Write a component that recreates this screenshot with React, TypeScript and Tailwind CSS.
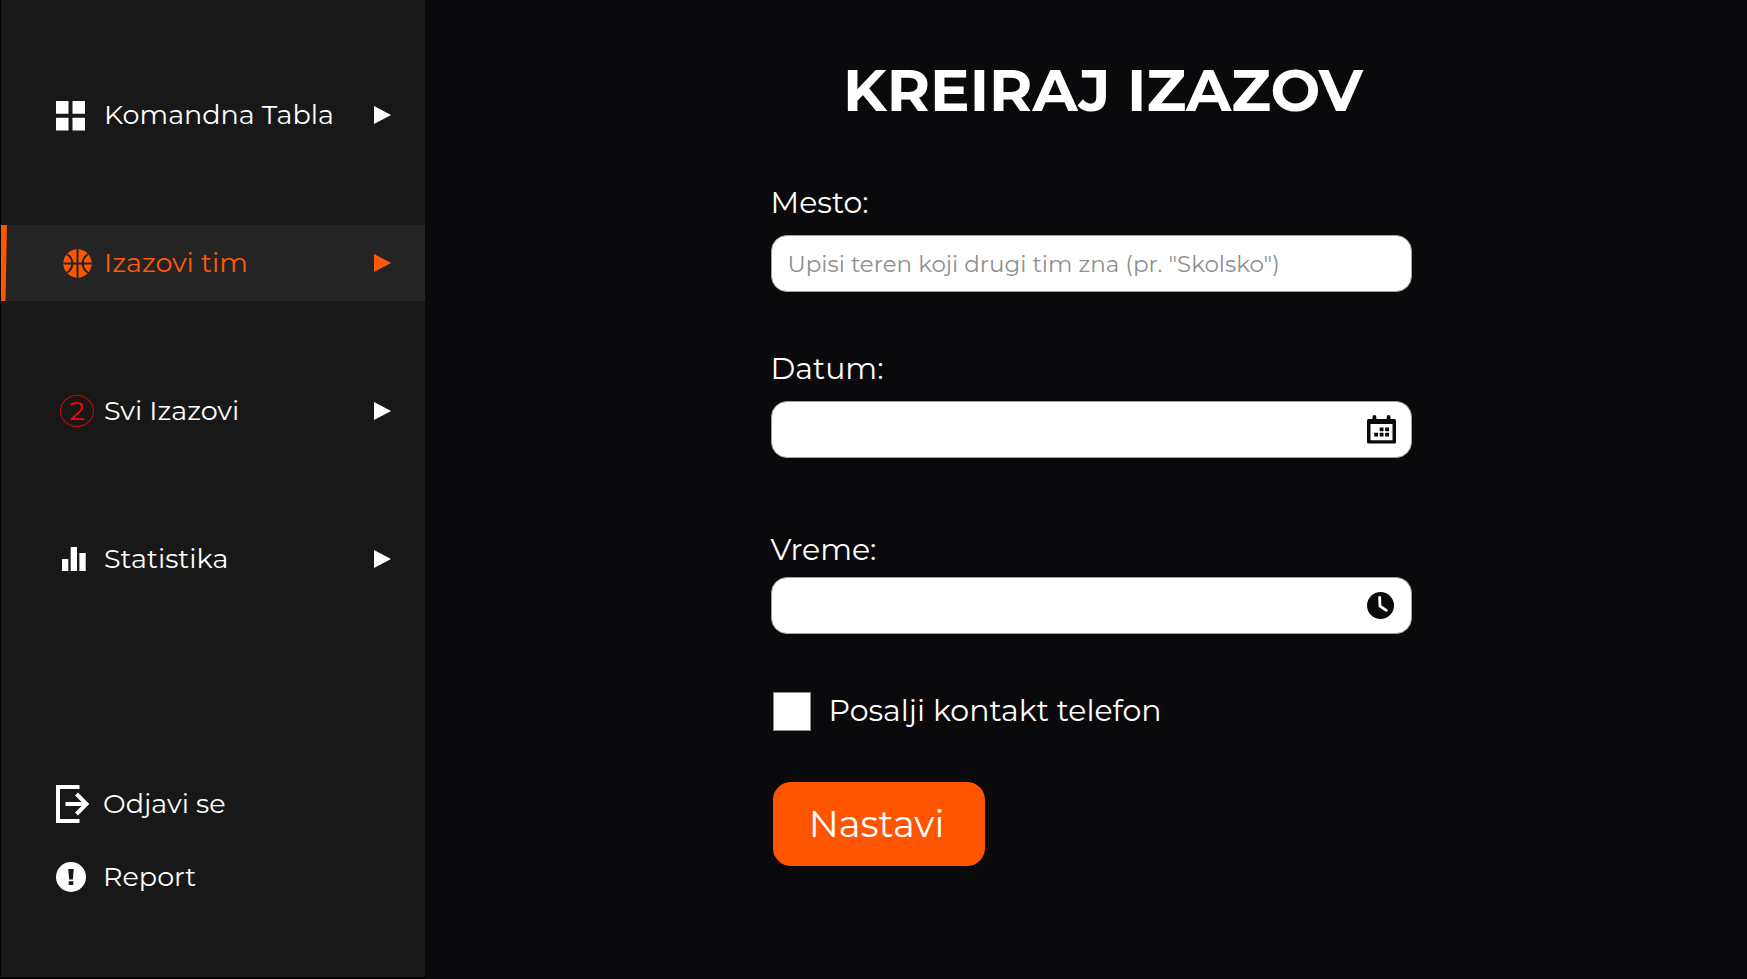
import { useState } from "react";
import type { ReactNode } from "react";

function GridIcon() {
  return (
    <svg width="30" height="31" viewBox="0 0 30 31" fill="#fff" aria-hidden="true">
      <rect x="1" y="1" width="12.5" height="12.8" rx="0.5" />
      <rect x="17.5" y="1" width="12.5" height="12.8" rx="0.5" />
      <rect x="1" y="17.8" width="12.5" height="12.8" rx="0.5" />
      <rect x="17.5" y="17.8" width="12.5" height="12.8" rx="0.5" />
    </svg>
  );
}

function BallIcon() {
  return (
    <svg width="29" height="29" viewBox="0 0 29 29" aria-hidden="true">
      <defs>
        <clipPath id="ball">
          <circle cx="14.5" cy="14.5" r="14.2" />
        </clipPath>
      </defs>
      <circle cx="14.5" cy="14.5" r="14.2" fill="#ff5500" />
      <g clipPath="url(#ball)" fill="none" stroke="#242424" strokeWidth="2">
        <path d="M14.5 0V29M0 14.5H29" />
        <circle cx="-1.5" cy="14.5" r="10.8" />
        <circle cx="30.5" cy="14.5" r="10.8" />
      </g>
    </svg>
  );
}

function BarsIcon() {
  return (
    <svg width="24" height="24" viewBox="0 0 24 24" fill="#fff" aria-hidden="true">
      <rect x="0" y="12" width="6.3" height="12" />
      <rect x="8.7" y="0" width="6.3" height="24" />
      <rect x="17.4" y="6" width="6.3" height="18" />
    </svg>
  );
}

function LogoutIcon() {
  return (
    <svg width="34" height="38" viewBox="0 0 34 38" fill="none" stroke="#fff" aria-hidden="true">
      <path d="M23.5 2H2V36H23.5" strokeWidth="4" />
      <path d="M9.5 19H30" strokeWidth="4" />
      <path d="M20.5 9L30.5 19L20.5 29" strokeWidth="4" />
    </svg>
  );
}

function AlertIcon() {
  return (
    <svg width="30" height="30" viewBox="0 0 30 30" aria-hidden="true">
      <circle cx="15" cy="15" r="15" fill="#fff" />
      <path d="M12.2 7H17.8L16.8 17.5H13.2Z" fill="#181818" />
      <rect x="12.7" y="19.2" width="4.6" height="3.8" fill="#181818" />
    </svg>
  );
}

function CalendarIcon() {
  return (
    <svg width="29" height="29" viewBox="0 0 29 29" fill="#0a0a0c" aria-hidden="true">
      <path
        fillRule="evenodd"
        d="M5.5 4V2a1.9 1.9 0 0 1 3.8 0V4H19.7V2a1.9 1.9 0 0 1 3.8 0V4H27.5A1.5 1.5 0 0 1 29 5.5V27A1.5 1.5 0 0 1 27.5 28.5H1.5A1.5 1.5 0 0 1 0 27V5.5A1.5 1.5 0 0 1 1.5 4ZM3.5 9V25.2H25.5V9Z"
      />
      <path d="M12.7 12.5h3.8v3.8h-3.8zM18.2 12.5h3.8v3.8h-3.8zM7.2 17.8h3.8v3.8h-3.8zM12.7 17.8h3.8v3.8h-3.8zM18.2 17.8h3.8v3.8h-3.8z" />
    </svg>
  );
}

function ClockIcon() {
  return (
    <svg width="29" height="27" viewBox="0 0 29 27" aria-hidden="true">
      <circle cx="13.5" cy="13.5" r="13.5" fill="#0a0a0c" />
      <path
        d="M12.6 5.3L13 14.1L19.3 18.3"
        fill="none"
        stroke="#fff"
        strokeWidth="2.8"
        strokeLinecap="round"
        strokeLinejoin="round"
      />
    </svg>
  );
}

function NavItem({ icon, label, active = false }: { icon: ReactNode; label: string; active?: boolean }) {
  return (
    <a
      href="#"
      aria-current={active ? "page" : undefined}
      className={
        active
          ? "relative flex h-[76px] items-center bg-[#242424] pr-[34px] pl-[54px] text-[#ff5a0a]"
          : "relative flex h-[76px] items-center pr-[34px] pl-[54px] text-white"
      }
    >
      {active && (
        <svg
          className="absolute inset-y-0 left-0 h-full w-1.5"
          viewBox="0 0 6 76"
          preserveAspectRatio="none"
          aria-hidden="true"
        >
          <path d="M0 0H6L4.5 76H0Z" fill="#ff5500" />
        </svg>
      )}
      {icon}
      <span className="flex-1 text-[27px] leading-9 whitespace-nowrap">{label}</span>
      <svg width="17" height="18" viewBox="0 0 17 18" fill="currentColor" aria-hidden="true">
        <path d="M0 0L17 9L0 18Z" />
      </svg>
    </a>
  );
}

function FooterLink({ icon, label }: { icon: ReactNode; label: string }) {
  return (
    <a href="#" className="flex h-[73px] items-center pl-[55px] text-white">
      <span className="flex w-[47px] items-center">{icon}</span>
      <span className="text-[27px] leading-9">{label}</span>
    </a>
  );
}

function Field({
  id,
  label,
  placeholder,
  action,
}: {
  id: string;
  label: string;
  placeholder?: string;
  action?: ReactNode;
}) {
  return (
    <>
      <label htmlFor={id} className="block text-[30px] leading-10">
        {label}
      </label>
      <div className="flex h-[57px] items-center rounded-2xl border border-[#a0a0a0] bg-white pr-[15px] pl-4">
        <input
          id={id}
          type="text"
          placeholder={placeholder}
          className="h-full min-w-0 flex-1 bg-transparent text-[23px] text-[#0a0a0c] outline-none placeholder:text-[#8f8f8f]"
        />
        {action}
      </div>
    </>
  );
}

export default function App() {
  const [share, setShare] = useState(false);

  return (
    <div className="flex min-h-screen bg-[#0a0a0c] font-['Montserrat','Inter',sans-serif] text-white">
      <aside className="flex w-[425px] shrink-0 flex-col border-b-2 border-l border-[#030303] bg-[#181818] pt-[77px] pb-16">
        <nav className="flex flex-col gap-[72px]">
          <NavItem icon={<span className="w-[49px]"><GridIcon /></span>} label="Komandna Tabla" />
          <NavItem icon={<span className="w-[49px] pl-2"><BallIcon /></span>} label="Izazovi tim" active />
          <NavItem
            icon={
              <span className="w-[49px] pl-[5px]">
                <span className="flex h-8 w-[34px] items-center justify-center rounded-[50%] border border-[#e00000] text-[27px] leading-8 text-[#ff0000]">
                  2
                </span>
              </span>
            }
            label="Svi Izazovi"
          />
          <NavItem icon={<span className="w-[49px] pl-[7px]"><BarsIcon /></span>} label="Statistika" />
        </nav>
        <div className="mt-auto">
          <FooterLink icon={<LogoutIcon />} label="Odjavi se" />
          <FooterLink icon={<AlertIcon />} label="Report" />
        </div>
      </aside>

      <main className="flex flex-1 justify-center pt-[54px] pb-20 pl-[10px]">
        <form className="w-[641px]" onSubmit={(e) => e.preventDefault()}>
          <h1 className="pl-6 text-center text-[59px] leading-[72px] font-bold whitespace-nowrap">KREIRAJ IZAZOV</h1>
          <div className="mt-[57px] flex flex-col gap-3">
            <Field id="mesto" label="Mesto:" placeholder={'Upisi teren koji drugi tim zna (pr. "Skolsko")'} />
          </div>
          <div className="mt-[57px] flex flex-col gap-3">
            <Field
              id="datum"
              label="Datum:"
              action={
                <button type="button" aria-label="Izaberi datum">
                  <CalendarIcon />
                </button>
              }
            />
          </div>
          <div className="mt-[72px] flex flex-col gap-[7px]">
            <Field
              id="vreme"
              label="Vreme:"
              action={
                <button type="button" aria-label="Izaberi vreme">
                  <ClockIcon />
                </button>
              }
            />
          </div>
          <label className="mt-[57px] flex items-center gap-[18px] pl-0.5 text-[30px] leading-10">
            <input
              type="checkbox"
              checked={share}
              onChange={(e) => setShare(e.target.checked)}
              className="h-[39px] w-[38px] appearance-none border border-[#8a8a8a] bg-white checked:bg-[#ff5500]"
            />
            Posalji kontakt telefon
          </label>
          <button
            type="submit"
            className="mt-[51px] ml-0.5 h-[84px] w-[212px] rounded-[18px] bg-[#ff5500] pr-1 text-[37px] text-white"
          >
            Nastavi
          </button>
        </form>
      </main>
    </div>
  );
}
